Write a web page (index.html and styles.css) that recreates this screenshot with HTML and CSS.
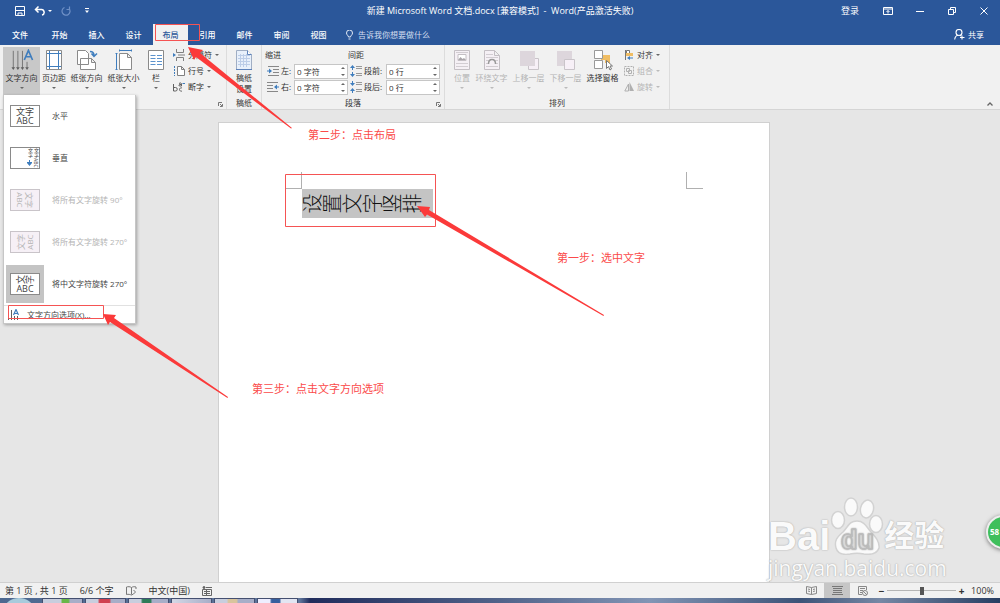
FILE: index.html
```html
<!DOCTYPE html>
<html>
<head>
  <meta charset="UTF-8">
  <title>新建 Microsoft Word 文档.docx</title>
  <meta name="viewport" content="width=device-width, initial-scale=1.0">
  <link rel="stylesheet" href="styles.css">
</head>
<body>

<header class="titlebar">
  <div class="quick-access">
    <button class="icon-btn"><svg width="10" height="10" viewBox="0 0 10 10" fill="none" stroke="#fff"><path d="M.5.5h9v9h-9zM.5 4.500h9M3 9.500V7h4v2.500"/></svg></button>
    <button class="icon-btn"><svg width="11" height="10" viewBox="0 0 11 10" fill="none" stroke="#fff" stroke-width="1.500"><path d="M4.500 .5L1.500 3.500l3 3M1.500 3.500H7a2.800 2.800 0 0 1 1 5.500"/></svg></button>
    <span class="caret light"></span>
    <button class="icon-btn"><svg width="10" height="10" viewBox="0 0 10 10" fill="none" stroke="#6f90c6" stroke-width="1.200"><path d="M3.500 1.500A4 4 0 1 0 8 2.500M5.500 3.500h3v-3"/></svg></button>
    <button class="icon-btn"><svg width="6" height="6" viewBox="0 0 6 6"><path fill="#fff" d="M1 0h4v1H1zM1 2.500h4L3 5z"/></svg></button>
  </div>
  <div class="doc-title">新建 Microsoft Word 文档.docx [兼容模式] &nbsp;-&nbsp; Word(产品激活失败)</div>
  <div class="window-buttons">
    <button class="login">登录</button>
    <button class="win-btn"><svg width="10" height="8" viewBox="0 0 10 8" fill="none" stroke="#fff"><path d="M.5.5h9v7h-9zM.5 2h9M5 6.500V3.500M3.500 5L5 3.500 6.500 5"/></svg></button>
    <button class="win-btn"><svg width="8" height="8" viewBox="0 0 8 8" stroke="#fff"><path d="M0 4.500h8"/></svg></button>
    <button class="win-btn"><svg width="8" height="8" viewBox="0 0 8 8" fill="none" stroke="#fff"><path d="M.5 2.500h5v5h-5zM2.500 2.500v-2h5v5h-2"/></svg></button>
    <button class="win-btn"><svg width="8" height="8" viewBox="0 0 8 8" stroke="#fff"><path d="M.5.5l7 7M7.500.5l-7 7"/></svg></button>
  </div>
</header>

<nav class="tabs">
  <button class="tab file">文件</button>
  <button class="tab">开始</button>
  <button class="tab">插入</button>
  <button class="tab">设计</button>
  <button class="tab active">布局</button>
  <button class="tab">引用</button>
  <button class="tab">邮件</button>
  <button class="tab">审阅</button>
  <button class="tab">视图</button>
  <button class="tell-me"><svg width="7" height="10" viewBox="0 0 7 10" fill="none" stroke="#e3eaf5"><path d="M2.500 7C2.500 5.500.5 5 .5 3a3 3 0 0 1 6 0c0 2-2 2.500-2 4zM2.500 9h2"/></svg>告诉我你想要做什么</button>
  <button class="share"><svg width="11" height="11" viewBox="0 0 11 11" fill="none" stroke="#fff" stroke-width="1.100"><circle cx="5" cy="3.500" r="3"/><path d="M.7 10.500C1 8 2.500 6.500 4 6.300M6 6.300l1.200.7M8 6.500v4M6 8.500h4.500"/></svg>共享</button>
</nav>

<section class="ribbon">
  <div class="group page-setup">
    <div class="menu-holder">
      <button class="big wide pressed">
        <svg class="big-icon" width="26" height="24" viewBox="0 0 26 24" fill="none"><path stroke="#707070" d="M3.500 2v19M8.500 2v19M13.500 2v19M18.500 14v7"/><path fill="#606060" d="M1.500 20h4l-2 3zM6.500 20h4l-2 3zM11.500 20h4l-2 3zM16.500 20h4l-2 3z"/><path stroke="#3f7dbd" stroke-width="1.800" d="M15.500 12L20 1.500 24.500 12M17 8.500h6"/></svg>
        <span>文字方向</span><span class="caret"></span>
      </button>
      <div class="menu">
        <button class="menu-item"><span class="thumb"><span>文字</span><span>ABC</span></span>水平</button>
        <button class="menu-item"><span class="thumb vertical"><span>文字</span><i><svg width="5" height="6" viewBox="0 0 5 6"><path fill="#3f7dbd" d="M2 0h1v2h2v1L2.500 6 0 3V2h2z"/></svg></i><span>文字ABC</span></span>垂直</button>
        <button class="menu-item" disabled><span class="thumb turn90"><b><span>文字</span><span>ABC</span></b></span>将所有文字旋转 90°</button>
        <button class="menu-item" disabled><span class="thumb turn270"><b><span>文字</span><span>ABC</span></b></span>将所有文字旋转 270°</button>
        <button class="menu-item chosen"><span class="thumb"><span><em class="turned">文</em><em class="turned">字</em></span><span>ABC</span></span>将中文字符旋转 270°</button>
        <button class="menu-footer"><svg width="11" height="12" viewBox="0 0 11 12" fill="none"><path stroke="#606060" d="M.5 1v10M3.500 1v10M6.500 7v4M9.500 7v4"/><path stroke="#3f7dbd" stroke-width="1.200" d="M5.500 6L8 .5 10.500 6M6.500 4.500h3"/></svg>文字方向选项(X)...</button>
      </div>
    </div>
    <button class="big margin-btn">
      <svg class="big-icon" width="18" height="22" viewBox="0 0 18 22" fill="none"><path fill="#fff" stroke="#8a8a8a" d="M1.500 1.500h15v19h-15z"/><path stroke="#3f7dbd" d="M4.500 2v18M13.500 2v18M2 4.500h14M2 17.500h14"/></svg>
      <span>页边距</span><span class="caret"></span>
    </button>
    <button class="big wide">
      <svg class="big-icon" width="22" height="22" viewBox="0 0 22 22"><path fill="#fff" stroke="#8a8a8a" d="M1.500 1.500h8l3 3v11h-11zM4.500 9.500h11l4 4v7h-15zM15.500 9.500v4h4"/><path fill="none" stroke="#3f7dbd" stroke-width="1.500" d="M14 2.500c3 0 4 1 4 4M15.500 4.500l2.500 3 3-3"/></svg>
      <span>纸张方向</span><span class="caret"></span>
    </button>
    <button class="big wide">
      <svg class="big-icon" width="18" height="22" viewBox="0 0 18 22"><path fill="#fff" stroke="#8a8a8a" d="M4.500 4.500h8l4 4v12h-12zM12.500 4.500v4h4"/><path fill="none" stroke="#3f7dbd" d="M4 1.500h13M4.500.5v2M16.500.5v2M1.500 4v17M.5 4.500h2M.5 20.500h2"/></svg>
      <span>纸张大小</span><span class="caret"></span>
    </button>
    <button class="big column-btn">
      <svg class="big-icon" width="18" height="22" viewBox="0 0 18 22"><path fill="#fff" stroke="#8a8a8a" d="M1.500 1.500h15v19h-15z"/><path stroke="#5b92cc" d="M3.500 6.500h5M10 6.500h5M3.500 9.500h5M10 9.500h5M3.500 12.500h5M10 12.500h5M3.500 15.500h5M10 15.500h5"/></svg>
      <span>栏</span><span class="caret"></span>
    </button>
    <div class="small-stack">
      <button class="small"><svg width="12" height="12" viewBox="0 0 12 12" fill="none" stroke="#808080"><path d="M3.500 0v3.500h7V0M3.500 12V8.500h7V12M5 6h7"/><path fill="#3f7dbd" stroke="none" d="M0 4l3 2-3 2z"/></svg>分隔符<span class="caret"></span></button>
      <button class="small"><svg width="12" height="12" viewBox="0 0 12 12" fill="none" stroke="#808080"><path fill="#fff" d="M4.500 1.500h4l3 3v6h-7zM8.500 1.500v3h3"/><path stroke="#3f7dbd" stroke-dasharray="2 1" d="M1.500 1v10"/></svg>行号<span class="caret"></span></button>
      <button class="small"><svg width="12" height="12" viewBox="0 0 12 12" fill="none" stroke="#606060"><path d="M.5 3v7h2a1.500 1.500 0 0 0 0-3.500h-2M9 7a1.700 1.700 0 1 0 0 3M6 2.500c1.500-1 2.500-.5 2.500.5v2H7c-1.500 0-1.500-1.500 0-1.500h1.500"/><path stroke="#3f7dbd" d="M9.500 2.500h2.500"/></svg>断字<span class="caret"></span></button>
    </div>
    <button class="launcher"><svg width="5" height="5" viewBox="0 0 5 5" fill="none" stroke="#777"><path d="M.5 4V.5H4M2 2l2 2M4.500 2v2.500H2"/></svg></button>
  </div>

  <div class="group draft">
    <button class="big">
      <svg class="big-icon" width="18" height="22" viewBox="0 0 18 22"><path fill="#e8f0fb" stroke="#a0aec4" d="M1.500 1.500h11l4 4v15h-15z"/><path stroke="#bccde8" d="M3 6.500h12M3 9.500h12M3 12.500h12M3 15.500h12M5.500 5v13M8.500 5v13M11.500 5v13"/><path fill="#fff" stroke="#5d82bb" d="M12.500 1.500v4h4"/><path stroke="#5d82bb" d="M1 20.500h16"/></svg>
      <span>稿纸<br>设置</span>
    </button>
    <div class="group-name">稿纸</div>
  </div>

  <div class="group paragraph">
    <div class="fields">
      <div class="field-head">缩进</div>
      <div class="field-head">间距</div>
      <div class="field">
        <svg width="12" height="10" viewBox="0 0 12 10"><path stroke="#888" d="M1 .5h11M6 3.500h6M6 6.500h6M1 9.500h11"/><path fill="#3f7dbd" d="M0 4.500h2V2.500L5 5 2 7.500V5.500H0z"/></svg>
        <label for="left">左:</label><input type="text" id="left" value="0 字符"><span class="spin"></span>
      </div>
      <div class="field">
        <svg width="12" height="12" viewBox="0 0 12 12"><path stroke="#999" d="M6 1.500h6M6 3.500h6M6 8.500h6M6 10.500h6"/><path fill="#3f7dbd" d="M2.500 0L5 3H3v2H2V3H0zM2.500 12L5 9H3V7H2v2H0z"/></svg>
        <label for="before">段前:</label><input type="text" id="before" value="0 行"><span class="spin"></span>
      </div>
      <div class="field">
        <svg width="12" height="10" viewBox="0 0 12 10"><path stroke="#888" d="M0 .5h11M0 3.500h6M0 6.500h6M0 9.500h11"/><path fill="#3f7dbd" d="M12 4.500h-2V2.500L7 5l3 2.500V5.500h2z"/></svg>
        <label for="right">右:</label><input type="text" id="right" value="0 字符"><span class="spin"></span>
      </div>
      <div class="field">
        <svg width="12" height="12" viewBox="0 0 12 12"><path stroke="#999" d="M6 1.500h6M6 3.500h6M6 8.500h6M6 10.500h6"/><path fill="#3f7dbd" d="M2.500 5L5 2H3V0H2v2H0zM2.500 7L5 10H3v2H2v-2H0z"/></svg>
        <label for="after">段后:</label><input type="text" id="after" value="0 行"><span class="spin"></span>
      </div>
    </div>
    <div class="group-name">段落</div>
    <button class="launcher"><svg width="5" height="5" viewBox="0 0 5 5" fill="none" stroke="#777"><path d="M.5 4V.5H4M2 2l2 2M4.500 2v2.500H2"/></svg></button>
  </div>

  <div class="group arrange">
    <button class="big position-btn" disabled>
      <svg class="big-icon" width="18" height="22" viewBox="0 0 18 22"><path fill="#f5f0f5" stroke="#c4bfc4" d="M1.500 1.500h15v19h-15z"/><path stroke="#d2cdd2" d="M3 3.500h12M3 14.500h12M3 17.500h12"/><path fill="#fff" stroke="#c4bfc4" d="M5 5.500h8v6H5z"/><path fill="#aaa5aa" d="M5 11l2.500-3 2 2 1.500-1 2 2z"/></svg>
      <span>位置</span><span class="caret"></span>
    </button>
    <button class="big wide" disabled>
      <svg class="big-icon" width="18" height="22" viewBox="0 0 18 22"><path fill="#f5f0f5" stroke="#c4bfc4" d="M1.500 1.500h10l5 5v14h-15zM11.500 1.500v5h5"/><path stroke="#d2cdd2" d="M3 5.500h7M3 8.500h12M3 11.500h3M12 11.500h3M3 14.500h3M12 14.500h3M3 17.500h12"/><path fill="none" stroke="#999" stroke-width="1.500" d="M5.500 15c0-6 7-6 7 0"/></svg>
      <span>环绕文字</span><span class="caret"></span>
    </button>
    <button class="big wide" disabled>
      <svg class="big-icon" width="20" height="22" viewBox="0 0 20 22"><path fill="#f7f0f7" stroke="#c9c4c9" d="M9.500 9.500h10v11h-10z"/><path fill="#ddd6dc" d="M1 2h15v15H1z"/></svg>
      <span>上移一层</span><span class="caret"></span>
    </button>
    <button class="big wide" disabled>
      <svg class="big-icon" width="20" height="22" viewBox="0 0 20 22"><path fill="#ddd6dc" d="M1 2h15v15H1z"/><path fill="#f7f0f7" stroke="#c9c4c9" d="M8.500 10.500h10v10h-10z"/></svg>
      <span>下移一层</span><span class="caret"></span>
    </button>
    <button class="big wide">
      <svg class="big-icon" width="20" height="22" viewBox="0 0 20 22"><path fill="#f0bd63" d="M8 6h9v8h-5v-3H8z"/><path fill="#fff" stroke="#999" d="M1.500 1.500h8v8h-8zM1.500 11.500h8v8h-8z"/><path fill="#fff" stroke="#777" d="M13.500 11.500v8l2-2 1.500 3.500 1.500-1-1.500-3h2.500z"/></svg>
      <span>选择窗格</span>
    </button>
    <div class="small-stack">
      <button class="small"><svg width="10" height="12" viewBox="0 0 10 12"><path stroke="#777" d="M1.500 1v10"/><path fill="#fff" stroke="#777" d="M2.500 1.500h3v3h-3z"/><path fill="#f0bd63" d="M2 4h7v3H2z"/><path fill="#3f7dbd" d="M3 9l3-2v1.500h3v1H6V11z"/></svg>对齐<span class="caret"></span></button>
      <button class="small" disabled><svg width="10" height="12" viewBox="0 0 10 12" fill="none" stroke="#b0b0b0"><path stroke-dasharray="2 1" d="M.5 1.500h9v9h-9z"/><path d="M2.500 3.500h3v3h-3zM4.500 5.500h3v3h-3z"/></svg>组合<span class="caret"></span></button>
      <button class="small" disabled><svg width="10" height="12" viewBox="0 0 10 12"><path fill="none" stroke="#b0b0b0" d="M4.500 3v7H.8z"/><path fill="#b0b0b0" d="M5.500 1L10 10H5.500z"/></svg>旋转<span class="caret"></span></button>
    </div>
    <div class="group-name">排列</div>
  </div>
  <button class="collapse"><svg width="6" height="4" viewBox="0 0 6 4" fill="none" stroke="#666" stroke-width="1.300"><path d="M.5 3.500L3 1l2.500 2.500"/></svg></button>
</section>

<main class="workspace">
  <article class="paper">
    <span class="corner corner-left"></span>
    <span class="corner corner-right"></span>
    <p class="selection"><em class="turned">设</em><em class="turned">置</em><em class="turned">文</em><em class="turned">字</em><em class="turned">竖</em><em class="turned">排</em></p>
  </article>
  <div class="watermark">
    <div class="wm-logo">
      <span class="wm-bai">Bai</span>
      <svg width="54" height="60" viewBox="0 0 54 60" fill="#fafafa" stroke="#d2d2d2" stroke-width="1.500"><ellipse cx="8" cy="25" rx="6.500" ry="8.500"/><ellipse cx="21" cy="12" rx="6.500" ry="9"/><ellipse cx="37" cy="14" rx="6.500" ry="9" transform="rotate(12 37 14)"/><ellipse cx="46" cy="29" rx="6.500" ry="8.500"/><path d="M27 26c-8 0-9 6-14 11C7 42 4 46 6 53c2 7 8 7 14 6 5-1 9-1 14 0 7 1 13 0 15-6 1-6-3-11-8-16-4-4-6-11-14-11z"/><text x="11" y="54" class="wm-du">du</text></svg>
      <span class="wm-cn">经验</span>
    </div>
    <div class="wm-url">jingyan.baidu.com</div>
  </div>
  <div class="badge">58</div>
</main>

<footer class="statusbar">
  <span>第 1 页 , 共 1 页</span>
  <span>6/6 个字</span>
  <svg width="11" height="10" viewBox="0 0 11 10" fill="none" stroke="#777"><path d="M5.500 1.500v7M5.500 1.500C4 .5 2 .5.500 1v7.500c2-.5 3.500 0 5 .5l2-1M5.500 1.500C7 .5 8.500.5 10 1v2M7.500 4l2 2-2 2"/></svg>
  <span>中文(中国)</span>
  <svg width="10" height="10" viewBox="0 0 10 10" fill="none" stroke="#666"><path d="M.5 3.500h9v6h-9zM2 5.500h6M2 7.500h6M4.500 4v5"/><circle cx="2" cy="1.500" r="1" fill="#555"/><path d="M4 1.500h6"/></svg>
  <div class="view-tools">
    <button class="view"><svg width="11" height="9" viewBox="0 0 11 9" fill="none" stroke="#888"><path d="M5.500 1.500v7M5.500 1.500L.5.500v7l5 1 5-1v-7zM2 3l2 .5M2 5l2 .5M7 3.500L9 3M7 5.500L9 5"/></svg></button>
    <button class="view current"><svg width="11" height="10" viewBox="0 0 11 10" stroke="#777"><path d="M0 .5h11M1 2.500h9M1 4.500h9M1 6.500h9M0 8.500h11"/></svg></button>
    <button class="view"><svg width="10" height="10" viewBox="0 0 10 10" fill="none" stroke="#888"><path d="M4 8.500H.5v-8h8V4M2 2.500h5M2 4.500h3M2 6.500h2"/><circle cx="7" cy="7" r="2.500"/><path d="M5 5l4 4"/></svg></button>
    <button class="zoom-step">−</button>
    <input class="zoom" type="range" min="0" max="100" value="50" aria-label="缩放">
    <button class="zoom-step">+</button>
    <span>100%</span>
  </div>
</footer>

<div class="taskbar">
  <span class="orb"></span>
  <span class="task green"></span>
  <span class="task red"></span>
  <span class="task darkgreen"></span>
  <span class="task"></span>
  <span class="task tan"></span>
  <span class="task blue"></span>
</div>

<!-- step notes drawn over the window -->
<svg class="marks" width="1000" height="603" viewBox="0 0 1000 603">
  <g fill="none" stroke="#f55353">
    <path d="M155.500 24.500h44v16h-44zM285.500 174.500h150v52h-150zM8.500 305.500h95v13h-95z"/>
  </g>
  <g fill="#fb3a3a">
    <path d="M188 47L203 50 200 53 292 128 291 128.500 196 57 194 60z"/>
    <path d="M417 206L430 207 429 210 604 315 603.500 316 427 214.500 425 217z"/>
    <path d="M103 314L116 315 114 318 228 397 227.500 398 110 322 108 325z"/>
  </g>
</svg>
<p class="note step-two">第二步：点击布局</p>
<p class="note step-one">第一步：选中文字</p>
<p class="note step-three">第三步：点击文字方向选项</p>

</body>
</html>
```
FILE: styles.css
```css
* {
  box-sizing: border-box;
}
body {
  margin: 0;
  height: 100vh;
  display: flex;
  flex-direction: column;
  position: relative;
  overflow: hidden;
  font-family: "Open Sans", "Noto Sans CJK SC", sans-serif;
  font-size: 8px;
  line-height: 12px;
  color: #333;
  background: #e6e6e6;
}
button {
  margin: 0;
  padding: 0;
  border: none;
  background: none;
  font: inherit;
  color: inherit;
}
button:disabled {
  color: #b4b4b4;
}
svg {
  flex: none;
  display: block;
}
em {
  font-style: normal;
}
.caret {
  width: 0;
  border: 2px solid transparent;
  border-top-color: #666;
  border-bottom: none;
}
.caret.light {
  border-top-color: #fff;
}
button:disabled .caret {
  border-top-color: #bbb;
}

/* title bar */
.titlebar {
  display: grid;
  grid-template-columns: 1fr auto 1fr;
  align-items: center;
  height: 22px;
  background: #2b579a;
  color: #fff;
}
.quick-access {
  display: flex;
  align-items: center;
  gap: 9px;
  padding-left: 15px;
}
.quick-access .caret {
  margin-left: -6px;
}
.quick-access .icon-btn:last-child {
  margin-left: 4px;
}
.doc-title {
  font-size: 9px;
  white-space: nowrap;
}
.window-buttons {
  display: flex;
  justify-content: flex-end;
  align-items: center;
}
.login {
  margin-right: 13px;
  font-size: 9px;
}
.win-btn {
  width: 32px;
  display: flex;
  justify-content: center;
}

/* ribbon tabs */
.tabs {
  display: flex;
  gap: 2px;
  height: 23px;
  padding-top: 2px;
  background: #2b579a;
  color: #fff;
  font-weight: 500;
}
.tab {
  width: 35px;
}
.tab.file {
  width: 40px;
}
.tab.active {
  background: #f1f1f1;
  color: #2b579a;
}
.tell-me,
.share {
  display: flex;
  align-items: center;
  gap: 5px;
  margin-left: 8px;
  font-weight: 400;
  color: #d5dff0;
}
.share {
  gap: 3px;
  margin-left: auto;
  padding-right: 16px;
  color: #fff;
}

/* ribbon */
.ribbon {
  display: flex;
  height: 65px;
  background: #f1f1f1;
  border-bottom: 1px solid #d5d5d5;
}
.group {
  position: relative;
  display: flex;
  align-items: flex-start;
  padding-top: 2px;
  border-right: 1px solid #dcdcdc;
}
.group-name {
  position: absolute;
  left: 0;
  right: 0;
  bottom: 0;
  text-align: center;
}
.launcher {
  position: absolute;
  right: 3px;
  bottom: 2px;
}
.page-setup {
  width: 227px;
  padding-left: 3px;
}
.draft {
  width: 35px;
}
.paragraph {
  width: 183px;
}
.arrange {
  width: 225px;
  padding-left: 6px;
}
.big {
  display: flex;
  flex-direction: column;
  align-items: center;
  height: 48px;
  padding-top: 2px;
  line-height: 11px;
  white-space: nowrap;
}
.big-icon {
  height: 22px;
  margin-bottom: 1px;
}
.big .caret {
  margin-top: 4px;
}
.big.wide {
  width: 37px;
}
.big.pressed {
  background: #c8c8c8;
}
.big.margin-btn {
  width: 28px;
}
.big.column-btn {
  width: 28px;
}
.big.position-btn {
  width: 22px;
}
.draft .big {
  width: 34px;
}
.small-stack {
  display: flex;
  flex-direction: column;
  margin-left: 3px;
}
.small {
  display: flex;
  align-items: center;
  gap: 3px;
  height: 16px;
  white-space: nowrap;
}
.collapse {
  align-self: flex-end;
  margin: 0 7px 3px auto;
}

/* indent and spacing boxes */
.fields {
  display: grid;
  grid-template-columns: 83px 92px;
  grid-auto-rows: 16px;
  padding-left: 3px;
}
.field-head {
  line-height: 16px;
}
.field {
  position: relative;
  display: flex;
  align-items: center;
  gap: 2px;
  padding-left: 2px;
}
.field label {
  flex: 1;
  white-space: nowrap;
}
.field input {
  width: 54px;
  height: 15px;
  padding: 0 2px;
  border: 1px solid #c6c6c6;
  background: #fff;
  font: inherit;
  color: #333;
}
.spin {
  position: absolute;
  right: 3px;
  top: 4px;
  height: 2px;
  border: 2px solid transparent;
  border-top: none;
  border-bottom-color: #666;
}
.spin::after {
  content: "";
  position: absolute;
  left: -2px;
  top: 7px;
  border: 2px solid transparent;
  border-bottom: none;
  border-top-color: #666;
}

/* text direction menu */
.menu-holder {
  position: relative;
}
.menu {
  position: absolute;
  z-index: 2;
  top: 48px;
  left: 0;
  width: 133px;
  background: #fff;
  border: 1px solid #c6c6c6;
  border-top: none;
  box-shadow: 1px 1px 3px rgba(0, 0, 0, 0.3);
}
.menu-item {
  display: flex;
  align-items: center;
  gap: 12px;
  width: 100%;
  height: 42px;
  padding-left: 6px;
  color: #444;
  white-space: nowrap;
}
.thumb {
  display: flex;
  flex-direction: column;
  align-items: center;
  justify-content: center;
  width: 30px;
  height: 22px;
  border: 1px solid #8a8a8a;
  background: #fff;
  font-size: 9px;
  line-height: 9px;
}
.menu-item:disabled .thumb {
  background: #f6f0f6;
  border-color: #c9c4c9;
}
.thumb b {
  display: flex;
  flex-direction: column;
  align-items: center;
  font-size: 8px;
  line-height: 9px;
  font-weight: 400;
}
.turn90 b {
  transform: rotate(90deg);
}
.turn270 b {
  transform: rotate(-90deg);
}
.thumb.vertical {
  flex-direction: row;
  align-items: flex-start;
  justify-content: flex-end;
  position: relative;
  font-size: 5px;
  line-height: 6px;
}
.thumb.vertical span {
  writing-mode: vertical-rl;
}
.thumb.vertical i {
  position: absolute;
  right: 7px;
  bottom: 2px;
}
.chosen .thumb {
  box-shadow: 0 -4px 0 4px #c4c4c4, 0 4px 0 4px #c4c4c4;
}
.turned {
  display: inline-block;
  transform: rotate(-90deg);
}
.menu-footer {
  display: flex;
  align-items: center;
  gap: 8px;
  width: 100%;
  height: 18px;
  padding-left: 4px;
  border-top: 1px solid #e1e1e1;
  color: #444;
}

/* document */
.workspace {
  flex: 1;
  min-height: 0;
  display: flex;
  justify-content: center;
  position: relative;
  padding: 12px 12px 0 0;
  overflow: hidden;
}
.paper {
  position: relative;
  width: 552px;
  padding: 66px 83px;
  background: #fff;
  border: 1px solid #d0d0d0;
  border-bottom: none;
}
.corner {
  position: absolute;
  top: 49px;
  width: 17px;
  height: 17px;
  border-bottom: 1px solid #b0b0b0;
}
.corner-left {
  left: 66px;
  border-right: 1px solid #b0b0b0;
}
.corner-right {
  right: 66px;
  border-left: 1px solid #b0b0b0;
}
.selection {
  display: inline-block;
  margin: 0;
  padding-right: 11px;
  background: #c4c4c4;
  color: #111;
  font-size: 20px;
  line-height: 29px;
  font-weight: 300;
}
.watermark {
  position: absolute;
  right: 54px;
  bottom: 1px;
  width: 178px;
  color: #fafafa;
  text-shadow: 0 0 1px #aaa, 0 0 2px #bbb;
}
.wm-logo {
  display: flex;
  align-items: flex-end;
  white-space: nowrap;
}
.wm-bai {
  font: bold 40px/38px "Liberation Sans", sans-serif;
}
.wm-cn {
  font-size: 30px;
  line-height: 40px;
  font-weight: 700;
}
.wm-du {
  font: bold 27px "Liberation Sans", sans-serif;
  fill: #e2e2e2;
  stroke: #bdbdbd;
  stroke-width: 1px;
}
.wm-url {
  font-size: 21px;
  line-height: 26px;
}
.badge {
  position: absolute;
  right: -20px;
  top: 405px;
  width: 34px;
  height: 34px;
  padding-left: 2px;
  border: 2px solid #eee;
  border-radius: 50%;
  background: #3fbf5c;
  box-shadow: 0 1px 4px #777;
  color: #fff;
  font-weight: 700;
  line-height: 29px;
}

/* status bar */
.statusbar {
  display: flex;
  align-items: center;
  gap: 12px;
  height: 16px;
  padding: 0 6px 0 5px;
  background: #f1f1f1;
  border-top: 1px solid #d0d0d0;
  font-size: 9px;
  white-space: nowrap;
}
.view-tools {
  display: flex;
  align-items: center;
  margin-left: auto;
}
.view {
  display: flex;
  align-items: center;
  justify-content: center;
  width: 26px;
  height: 15px;
}
.view.current {
  background: #c6c6c6;
}
.zoom-step {
  width: 11px;
  font-size: 10px;
  font-weight: 700;
}
.zoom {
  appearance: none;
  width: 69px;
  height: 9px;
  margin: 0;
  background: linear-gradient(#b5b5b5, #b5b5b5) center / 100% 1px no-repeat;
}
.zoom::-webkit-slider-thumb {
  appearance: none;
  width: 4px;
  height: 8px;
  background: #555;
}
.view-tools > span {
  margin-left: 4px;
}

/* taskbar */
.taskbar {
  display: flex;
  height: 5px;
  padding-left: 5px;
  background: linear-gradient(90deg, #4d6890, #5f759b 30%, #202c5c 31%, #51638a 50%, #8295b5 65%, #3c5378 80%, #7688a5 88%, #263d62);
  overflow: hidden;
}
.orb {
  width: 28px;
  height: 20px;
  margin-right: 9px;
  border-radius: 50%;
  background: #a8cbdc;
}
.task {
  width: 41px;
  margin-right: 2px;
  border: 1px solid #444f70;
  border-bottom: none;
  background: linear-gradient(90deg, #d4d8e6, #a7aec8);
}
.green {
  background: linear-gradient(90deg, #c8cede 45%, #68b848 50% 65%, #a7aec8 70%);
}
.red {
  background: linear-gradient(90deg, #c8cede 30%, #d04050 35% 60%, #a7aec8 65%);
}
.darkgreen {
  background: linear-gradient(90deg, #c8cede 30%, #2d7c58 35% 55%, #a7aec8 60%);
}
.tan {
  background: linear-gradient(90deg, #c8cede 30%, #d8c49c 35% 55%, #a7aec8 60%);
}
.blue {
  background: linear-gradient(90deg, #eef 30%, #365f9e 35% 55%, #e2e5f2 60%);
}

/* notes */
.marks {
  position: absolute;
  z-index: 3;
  top: 0;
  left: 0;
  pointer-events: none;
}
.note {
  position: absolute;
  z-index: 3;
  margin: 0;
  font-size: 11px;
  line-height: 16px;
  color: #fb4a4a;
}
.step-two {
  left: 308px;
  top: 127px;
}
.step-one {
  left: 557px;
  top: 250px;
}
.step-three {
  left: 252px;
  top: 381px;
}
```
